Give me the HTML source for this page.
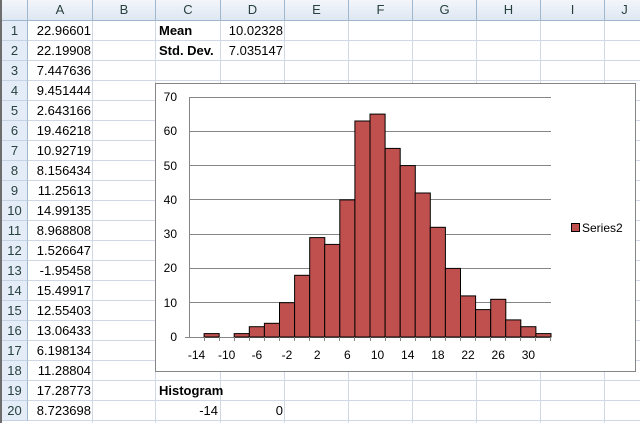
<!DOCTYPE html>
<html><head><meta charset="utf-8"><style>
body{margin:0;width:640px;height:423px;overflow:hidden;background:#fff;font-family:"Liberation Sans",sans-serif;font-size:13px;color:#000;position:relative}
.v{position:absolute;width:1px;top:21px;height:402px;background:#d0d7e5}
.h{position:absolute;height:1px;left:28px;width:612px;background:#d0d7e5}
.hdr{position:absolute;top:0;height:20px;background:linear-gradient(#f3f6fb,#dfe7f2);border-right:1px solid #9eb6ce;border-bottom:1px solid #9eb6ce;color:#27413e;text-align:center;line-height:20px;font-size:13px;box-sizing:border-box;height:21px}
.rn{position:absolute;left:2px;width:26px;height:20px;background:#e4ecf7;border-right:1px solid #9eb6ce;border-bottom:1px solid #c5d3e5;box-sizing:border-box;text-align:center;line-height:20px;color:#27413e}
.a{position:absolute;left:28px;width:63px;text-align:right;line-height:20px;height:20px}
.t{position:absolute;line-height:20px}
</style></head><body>
<div style="position:absolute;left:0;top:0;width:2px;height:423px;background:#6d6d6d"></div>
<div class="hdr" style="left:2px;width:26px"></div>
<div class="hdr" style="left:28px;width:65px">A</div>
<div class="hdr" style="left:93px;width:63px">B</div>
<div class="hdr" style="left:156px;width:65px">C</div>
<div class="hdr" style="left:221px;width:64px">D</div>
<div class="hdr" style="left:285px;width:64px">E</div>
<div class="hdr" style="left:349px;width:64px">F</div>
<div class="hdr" style="left:413px;width:64px">G</div>
<div class="hdr" style="left:477px;width:64px">H</div>
<div class="hdr" style="left:541px;width:64px">I</div>
<div class="hdr" style="left:605px;width:40px">J</div>
<div class="v" style="left:92px"></div><div class="v" style="left:155px"></div><div class="v" style="left:220px"></div><div class="v" style="left:284px"></div><div class="v" style="left:348px"></div><div class="v" style="left:412px"></div><div class="v" style="left:476px"></div><div class="v" style="left:540px"></div><div class="v" style="left:604px"></div>
<div class="h" style="top:40px"></div><div class="h" style="top:60px"></div><div class="h" style="top:80px"></div><div class="h" style="top:100px"></div><div class="h" style="top:120px"></div><div class="h" style="top:140px"></div><div class="h" style="top:160px"></div><div class="h" style="top:180px"></div><div class="h" style="top:200px"></div><div class="h" style="top:220px"></div><div class="h" style="top:240px"></div><div class="h" style="top:260px"></div><div class="h" style="top:280px"></div><div class="h" style="top:300px"></div><div class="h" style="top:320px"></div><div class="h" style="top:340px"></div><div class="h" style="top:360px"></div><div class="h" style="top:380px"></div><div class="h" style="top:400px"></div><div class="h" style="top:420px"></div>
<div class="rn" style="top:21px">1</div><div class="rn" style="top:41px">2</div><div class="rn" style="top:61px">3</div><div class="rn" style="top:81px">4</div><div class="rn" style="top:101px">5</div><div class="rn" style="top:121px">6</div><div class="rn" style="top:141px">7</div><div class="rn" style="top:161px">8</div><div class="rn" style="top:181px">9</div><div class="rn" style="top:201px">10</div><div class="rn" style="top:221px">11</div><div class="rn" style="top:241px">12</div><div class="rn" style="top:261px">13</div><div class="rn" style="top:281px">14</div><div class="rn" style="top:301px">15</div><div class="rn" style="top:321px">16</div><div class="rn" style="top:341px">17</div><div class="rn" style="top:361px">18</div><div class="rn" style="top:381px">19</div><div class="rn" style="top:401px">20</div>
<div class="a" style="top:21px">22.96601</div><div class="a" style="top:41px">22.19908</div><div class="a" style="top:61px">7.447636</div><div class="a" style="top:81px">9.451444</div><div class="a" style="top:101px">2.643166</div><div class="a" style="top:121px">19.46218</div><div class="a" style="top:141px">10.92719</div><div class="a" style="top:161px">8.156434</div><div class="a" style="top:181px">11.25613</div><div class="a" style="top:201px">14.99135</div><div class="a" style="top:221px">8.968808</div><div class="a" style="top:241px">1.526647</div><div class="a" style="top:261px">-1.95458</div><div class="a" style="top:281px">15.49917</div><div class="a" style="top:301px">12.55403</div><div class="a" style="top:321px">13.06433</div><div class="a" style="top:341px">6.198134</div><div class="a" style="top:361px">11.28804</div><div class="a" style="top:381px">17.28773</div><div class="a" style="top:401px">8.723698</div>
<div class="t" style="left:159px;top:21px;font-weight:bold">Mean</div>
<div class="t" style="left:159px;top:41px;font-weight:bold">Std. Dev.</div>
<div class="t" style="left:221px;width:62px;text-align:right;top:21px">10.02328</div>
<div class="t" style="left:221px;width:62px;text-align:right;top:41px">7.035147</div>
<div class="t" style="left:159px;top:381px;font-weight:bold">Histogram</div>
<div class="t" style="left:156px;width:62px;text-align:right;top:401px">-14</div>
<div class="t" style="left:221px;width:62px;text-align:right;top:401px">0</div>
<svg style="position:absolute;left:0;top:0" width="640" height="423" font-family="Liberation Sans, sans-serif" font-size="12">
<rect x="155.5" y="83.5" width="480" height="288" fill="#fff" stroke="#868686"/>
<g stroke="#868686" stroke-width="1">
<line x1="189" y1="97.5" x2="551" y2="97.5"/><line x1="189" y1="131.5" x2="551" y2="131.5"/><line x1="189" y1="165.5" x2="551" y2="165.5"/><line x1="189" y1="199.5" x2="551" y2="199.5"/><line x1="189" y1="234.5" x2="551" y2="234.5"/><line x1="189" y1="268.5" x2="551" y2="268.5"/><line x1="189" y1="302.5" x2="551" y2="302.5"/>
<line x1="185" y1="337.5" x2="551" y2="337.5"/><line x1="189.5" y1="97" x2="189.5" y2="337"/>
</g>
<g fill="#c0504d" stroke="#000" stroke-width="1">
<rect x="204.1" y="333.6" width="15.1" height="3.4"/>
<rect x="234.2" y="333.6" width="15.1" height="3.4"/>
<rect x="249.3" y="326.7" width="15.1" height="10.3"/>
<rect x="264.4" y="323.3" width="15.1" height="13.7"/>
<rect x="279.5" y="302.7" width="15.1" height="34.3"/>
<rect x="294.6" y="275.3" width="15.1" height="61.7"/>
<rect x="309.7" y="237.6" width="15.1" height="99.4"/>
<rect x="324.7" y="244.4" width="15.1" height="92.6"/>
<rect x="339.8" y="199.9" width="15.1" height="137.1"/>
<rect x="354.9" y="121" width="15.1" height="216"/>
<rect x="370" y="114.1" width="15.1" height="222.9"/>
<rect x="385.1" y="148.4" width="15.1" height="188.6"/>
<rect x="400.2" y="165.6" width="15.1" height="171.4"/>
<rect x="415.2" y="193" width="15.1" height="144"/>
<rect x="430.3" y="227.3" width="15.1" height="109.7"/>
<rect x="445.4" y="268.4" width="15.1" height="68.6"/>
<rect x="460.5" y="295.9" width="15.1" height="41.1"/>
<rect x="475.6" y="309.6" width="15.1" height="27.4"/>
<rect x="490.7" y="299.3" width="15.1" height="37.7"/>
<rect x="505.7" y="319.9" width="15.1" height="17.1"/>
<rect x="520.8" y="326.7" width="15.1" height="10.3"/>
<rect x="535.9" y="333.6" width="15.1" height="3.4"/>
</g>
<g stroke="#868686"><line x1="204.5" y1="337" x2="204.5" y2="341"/><line x1="219.5" y1="337" x2="219.5" y2="341"/><line x1="234.5" y1="337" x2="234.5" y2="341"/><line x1="249.5" y1="337" x2="249.5" y2="341"/><line x1="264.5" y1="337" x2="264.5" y2="341"/><line x1="279.5" y1="337" x2="279.5" y2="341"/><line x1="294.5" y1="337" x2="294.5" y2="341"/><line x1="309.5" y1="337" x2="309.5" y2="341"/><line x1="324.5" y1="337" x2="324.5" y2="341"/><line x1="339.5" y1="337" x2="339.5" y2="341"/><line x1="354.5" y1="337" x2="354.5" y2="341"/><line x1="370.5" y1="337" x2="370.5" y2="341"/><line x1="385.5" y1="337" x2="385.5" y2="341"/><line x1="400.5" y1="337" x2="400.5" y2="341"/><line x1="415.5" y1="337" x2="415.5" y2="341"/><line x1="430.5" y1="337" x2="430.5" y2="341"/><line x1="445.5" y1="337" x2="445.5" y2="341"/><line x1="460.5" y1="337" x2="460.5" y2="341"/><line x1="475.5" y1="337" x2="475.5" y2="341"/><line x1="490.5" y1="337" x2="490.5" y2="341"/><line x1="505.5" y1="337" x2="505.5" y2="341"/><line x1="520.5" y1="337" x2="520.5" y2="341"/><line x1="535.5" y1="337" x2="535.5" y2="341"/><line x1="550.5" y1="337" x2="550.5" y2="341"/></g>
<g text-anchor="end" fill="#000"><text x="177" y="101">70</text><text x="177" y="135">60</text><text x="177" y="170">50</text><text x="177" y="204">40</text><text x="177" y="238">30</text><text x="177" y="272">20</text><text x="177" y="307">10</text><text x="177" y="341">0</text></g>
<g text-anchor="middle" fill="#000"><text x="196.5" y="359">-14</text><text x="226.7" y="359">-10</text><text x="256.9" y="359">-6</text><text x="287" y="359">-2</text><text x="317.2" y="359">2</text><text x="347.4" y="359">6</text><text x="377.5" y="359">10</text><text x="407.7" y="359">14</text><text x="437.9" y="359">18</text><text x="468" y="359">22</text><text x="498.2" y="359">26</text><text x="528.4" y="359">30</text></g>
<rect x="571.5" y="223.5" width="8" height="8" fill="#c0504d" stroke="#000"/>
<text x="582" y="232" fill="#000">Series2</text>
</svg>
</body></html>
